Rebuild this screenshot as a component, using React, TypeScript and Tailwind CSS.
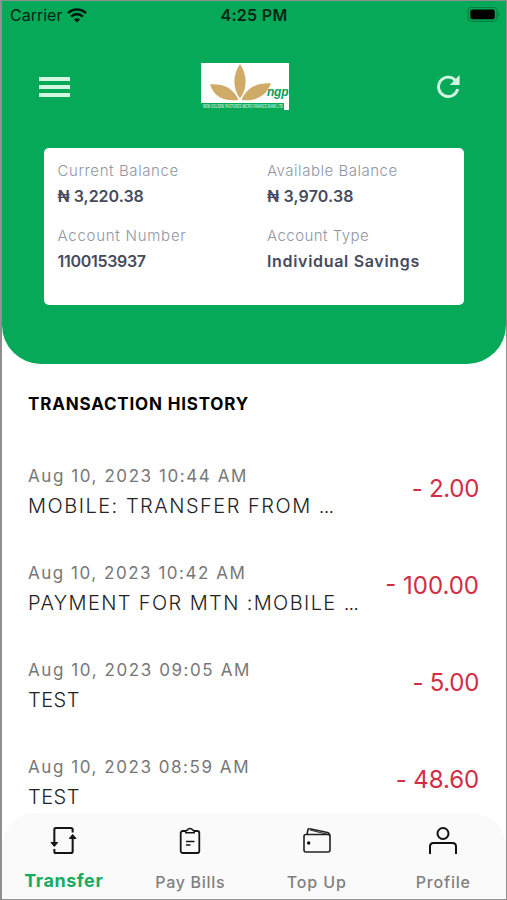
import React from "react";

const transactions = [
  { date: "Aug 10, 2023 10:44 AM", dateCls: "tracking-[1.57px]", text: "MOBILE: TRANSFER FROM ", more: true, textCls: "tracking-[1.5px]", amount: "- 2.00", amountCls: "tracking-[-0.3px]" },
  { date: "Aug 10, 2023 10:42 AM", dateCls: "tracking-[1.52px]", text: "PAYMENT FOR MTN :MOBILE ", more: true, textCls: "tracking-[1.38px]", amount: "- 100.00", amountCls: "tracking-[0px]" },
  { date: "Aug 10, 2023 09:05 AM", dateCls: "tracking-[1.58px]", text: "TEST", more: false, textCls: "tracking-[0.5px]", amount: "- 5.00", amountCls: "tracking-[-0.3px]" },
  { date: "Aug 10, 2023 08:59 AM", dateCls: "tracking-[1.55px]", text: "TEST", more: false, textCls: "tracking-[0.5px]", amount: "- 48.60", amountCls: "tracking-[-0.1px]" },
];

const fields = [
  { label: "Current Balance", labelCls: "tracking-[0.6px]", value: "₦ 3,220.38", valueCls: "tracking-[0px]" },
  { label: "Available Balance", labelCls: "tracking-[0.52px]", value: "₦ 3,970.38", valueCls: "tracking-[0.15px]" },
  { label: "Account Number", labelCls: "tracking-[0.75px]", value: "1100153937", valueCls: "tracking-[-0.3px]" },
  { label: "Account Type", labelCls: "tracking-[0.45px]", value: "Individual Savings", valueCls: "tracking-[0.68px]" },
];

function StatusBar() {
  return (
    <div className="grid h-[28px] grid-cols-3 items-center pl-[8px] pr-[5px] text-[16px] text-[#042614]">
      <div className="flex items-center gap-[5px]">
        <span className="tracking-[0px]">Carrier</span>
        <svg width="20" height="15" viewBox="0 0 20 15" fill="none" stroke="#021a0d" strokeWidth="2.6">
          <path d="M1 5.2C6 .2 14 .2 19 5.2" />
          <path d="M4.2 8.6C7.6 5.3 12.4 5.3 15.8 8.6" />
          <path d="M10 14.6 6.9 11.4c1.7-1.7 4.500-1.700 6.200 0z" fill="#021a0d" stroke="none" />
        </svg>
      </div>
      <span className="-ml-[3px] text-center font-semibold tracking-[0.3px]">4:25 PM</span>
      <svg className="justify-self-end" width="34" height="16" viewBox="0 0 34 16">
        <rect x="1" y=".3" width="29" height="14" rx="4" fill="none" stroke="#04803f" strokeWidth="1.200" />
        <rect x="3.300" y="2.500" width="24.500" height="9.800" rx="2" fill="#000" />
        <path d="M31.500 5v4.600c1.600-.6 1.600-4 0-4.600z" fill="#04803f" />
      </svg>
    </div>
  );
}

function Logo() {
  return (
    <svg className="overflow-visible" width="92" height="54" viewBox="0 0 92 54">
      <path d="M1 1H89V48H84V41H1z" fill="#fff" />
      <g fill="#cfab67">
        <path d="M40 2c7 10 8 24 0 34.500C32 26 33 12 40 2z" />
        <path d="M10 22.500c12-1 23 3 28.500 15.500C26 39 15 37 10 22.500z" />
        <path d="M71 21.500C58 20.500 47 25 41.500 38 54 39 65 36 71 21.500z" />
      </g>
      <text x="67" y="34" fontSize="12" fontWeight="700" fontStyle="italic" fill="#0b9a58" textLength="21.500" fontFamily="Liberation Sans, sans-serif">ngp</text>
      <text x="3" y="46.300" fontSize="4.600" fontWeight="700" fill="#b9ecd0" textLength="80" lengthAdjust="spacingAndGlyphs" fontFamily="Liberation Sans, sans-serif">NEW GOLDEN PASTURES MICRO FINANCE BANK LTD</text>
    </svg>
  );
}

function Header() {
  return (
    <header className="h-[363px] rounded-b-[39px] bg-[#05a958]">
      <StatusBar />
      <div className="flex h-[119px] items-start justify-between pl-[37px] pr-[46px] pt-[33px]">
        <div className="mt-[15px] flex w-[31px] flex-col gap-[4px]">
          <div className="h-[4px] bg-[#d2f8e2]" />
          <div className="h-[4px] bg-[#d2f8e2]" />
          <div className="h-[4px] bg-[#d2f8e2]" />
        </div>
        <div className="-ml-[15px]"><Logo /></div>
        <svg className="mt-[12px]" width="24" height="24" viewBox="0 0 24 24">
          <path d="M19.600 6.500A9.700 9.700 0 1 0 21.700 15" fill="none" stroke="#d2f8e2" strokeWidth="2.900" />
          <path d="M23.600 1v10h-9.800z" fill="#d2f8e2" />
        </svg>
      </div>
      <div className="ml-[42px] grid h-[157px] w-[420px] grid-cols-[209.500px_1fr] content-start gap-y-[14px] rounded-[5px] bg-white pl-[13.500px] pt-[10px]">
        {fields.map((f) => (
          <div key={f.label} className="flex flex-col">
            <span className={"h-[25px] whitespace-nowrap text-[15px] font-light leading-[25px] text-[#8f96a4] " + f.labelCls}>{f.label}</span>
            <span className={"h-[26px] whitespace-nowrap text-[16px] font-semibold leading-[26px] text-[#444b5e] " + f.valueCls}>{f.value}</span>
          </div>
        ))}
      </div>
    </header>
  );
}

function TransferIcon() {
  return (
    <svg width="27" height="30" viewBox="0 0 28 30" preserveAspectRatio="none" fill="none" stroke="#151515" strokeWidth="2.100">
      <path d="M4.500 17V3.500Q4.500 2 6 2H21.500Q23.500 2 23.500 3.500V6.500" />
      <path d="M4.500 23V25.500Q4.500 27 6 27H21.500Q23.500 27 23.500 25.500V11" />
      <path d="M1 16.500H8L4.500 20.500zM20 12.500H27L23.500 8.500z" fill="#151515" strokeWidth="1" />
    </svg>
  );
}

function ClipboardIcon() {
  return (
    <svg width="24" height="30" viewBox="0 0 24 30" fill="none" stroke="#151515" strokeWidth="1.800">
      <rect x="2.700" y="5" width="18.600" height="22" rx="2" />
      <path d="M7.800 6.700V5Q8 4 9.500 4 10 2.600 12 2.600T14.500 4Q16 4 16.200 5V6.700z" fill="#fafafa" strokeWidth="1.500" />
      <path d="M8 15.500H16.500M8 19H12.500" strokeWidth="1.700" />
    </svg>
  );
}

function WalletIcon() {
  return (
    <svg width="30" height="30" viewBox="0 0 30 30" fill="none" stroke="#222" strokeWidth="1.600">
      <rect x="2" y="8.500" width="26" height="17.500" rx="2" />
      <path d="M5 8.500 6 3.500Q6.300 2.500 7.500 2.800L25.500 6.500Q27.500 7 27.800 10" />
      <path d="M8 4 26 8.500" strokeWidth="1" />
      <circle cx="6.700" cy="17" r="1.700" fill="#111" stroke="none" />
    </svg>
  );
}

function ProfileIcon() {
  return (
    <svg width="30" height="30" viewBox="0 0 30 30" fill="none" stroke="#111" strokeWidth="2">
      <circle cx="15" cy="7.500" r="5.500" />
      <path d="M2 28V20.500Q2 17 5.500 17H24.500Q28 17 28 20.500V28" />
    </svg>
  );
}

const tabs = [
  { name: "Transfer", icon: <TransferIcon />, cls: "text-[18px] font-bold text-[#15ac61] tracking-[0.55px] leading-[25px]" },
  { name: "Pay Bills", icon: <ClipboardIcon />, cls: "text-[16px] font-medium text-[#7f7f7f] tracking-[0.7px] leading-[28px]" },
  { name: "Top Up", icon: <WalletIcon />, cls: "text-[16px] font-medium text-[#7f7f7f] tracking-[0.9px] leading-[28px]" },
  { name: "Profile", icon: <ProfileIcon />, cls: "text-[16px] font-medium text-[#7f7f7f] tracking-[0.8px] leading-[28px]" },
];

export default function App() {
  return (
    <div className="flex h-[900px] w-[507px] flex-col overflow-hidden border border-l-2 border-[#8f8f8f] bg-white font-['Inter',sans-serif]">
      <Header />
      <main className="flex h-[449px] shrink-0 flex-col pl-[26px] pr-[27px] pt-[28px]">
        <h1 className="h-[24px] whitespace-nowrap text-[17px] font-bold leading-[24px] text-black"><span className="tracking-[0.82px]">TRANSACTION HISTORY</span></h1>
        <ul className="mt-[47px]">
          {transactions.map((t) => (
            <li key={t.date} className="flex h-[97px] justify-between">
              <div className="flex flex-col whitespace-nowrap">
                <span className={"h-[30px] text-[17px] font-normal leading-[27px] text-[#777] " + t.dateCls}>{t.date}</span>
                <span className={"text-[20px] font-light leading-[27px] text-[#222] " + t.textCls}>
                  {t.text}
                  {t.more && <span className="tracking-[-0.8px]">...</span>}
                </span>
              </div>
              <span className={"mt-[10px] h-[32px] whitespace-nowrap text-[24px] font-normal leading-[32px] text-[#d12d45] " + t.amountCls}>{t.amount}</span>
            </li>
          ))}
        </ul>
      </main>
      <nav className="flex h-[85px] shrink-0 rounded-t-[34px] bg-[#fafafa] pr-[2px]">
        {tabs.map((t) => (
          <div key={t.name} className="-ml-[1.500px] mr-[1.500px] flex w-[126.500px] shrink-0 flex-col items-center pt-[13px]">
            {t.icon}
            <span className={"mt-[12px] whitespace-nowrap " + t.cls}>{t.name}</span>
          </div>
        ))}
      </nav>
    </div>
  );
}
